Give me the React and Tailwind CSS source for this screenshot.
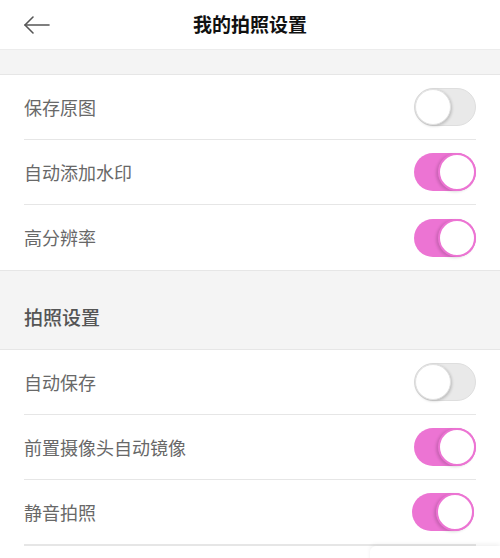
import React from 'react';

const font = { fontFamily: '"Noto Sans CJK SC", "Noto Sans", sans-serif' };

function Toggle({ on }) {
  if (on) {
    return (
      <div className="w-[62px] h-[38px] rounded-full bg-[#ec74d3] relative shrink-0">
        <div className="absolute right-0 top-0 w-[38px] h-[38px] rounded-full bg-white border-2 border-[#ec74d3] shadow-[-2px_1px_3px_rgba(0,0,0,0.15)]" />
      </div>
    );
  }
  return (
    <div className="w-[62px] h-[38px] rounded-full bg-[#e9e9e9] border border-[#dedede] relative shrink-0">
      <div className="absolute left-0 top-0 w-[36px] h-[36px] rounded-full bg-white border border-[#e2e2e2] shadow-[1px_1px_3px_rgba(0,0,0,0.2)]" />
    </div>
  );
}

function Row({ label, on, last, shift }) {
  return (
    <div className="pl-6 pr-6 bg-white">
      <div className={`h-[65px] flex items-center justify-between ${last ? '' : 'border-b border-[#e6e6e6]'}`}>
        <span className="text-[18px] text-[#686868]">{label}</span>
        <div className={shift ? 'mr-[2px]' : ''}>
          <Toggle on={on} />
        </div>
      </div>
    </div>
  );
}

export default function App() {
  return (
    <div className="w-[500px] h-[558px] bg-white overflow-hidden relative" style={font}>
      <div className="h-[50px] flex items-center justify-center relative border-b border-[#ececec]">
        <svg className="absolute left-[23px] top-[15px]" width="28" height="20" viewBox="0 0 28 20" fill="none" stroke="#555" strokeWidth="1.6" strokeLinecap="round" strokeLinejoin="round">
          <path d="M2 10 H26" />
          <path d="M10 2 L2 10 L10 18" />
        </svg>
        <span className="text-[19px] font-bold text-[#111]">我的拍照设置</span>
      </div>
      <div className="h-[25px] bg-[#f4f4f4] border-b border-[#e6e6e6]" />
      <Row label="保存原图" on={false} />
      <Row label="自动添加水印" on />
      <Row label="高分辨率" on last />
      <div className="h-[80px] bg-[#f4f4f4] border-t border-b border-[#e6e6e6] flex items-center pl-6 pt-[15px]">
        <span className="text-[19px] font-medium text-[#555]">拍照设置</span>
      </div>
      <Row label="自动保存" on={false} />
      <Row label="前置摄像头自动镜像" on />
      <Row label="静音拍照" on shift />
      <div className="ml-6 mr-6 border-b border-[#e6e6e6]" />
      <div className="absolute right-0 top-[546px] w-[130px] h-[20px] bg-white rounded-tl-[6px] shadow-[0_-2px_4px_rgba(0,0,0,0.06)]" />
    </div>
  );
}
